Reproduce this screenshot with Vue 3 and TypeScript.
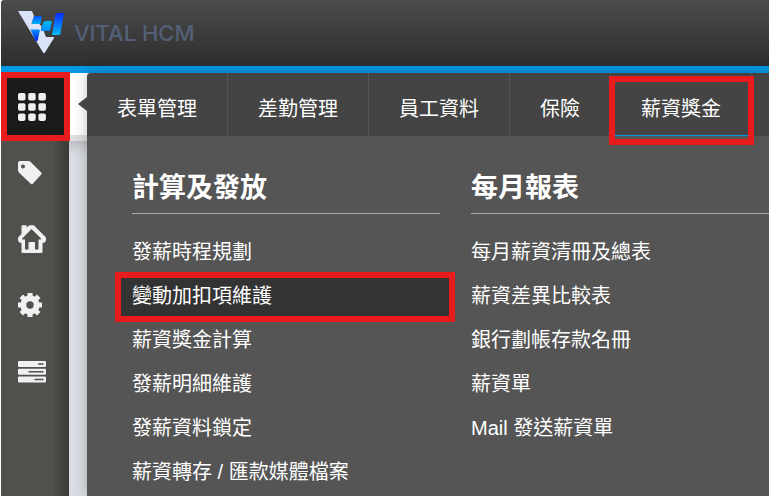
<script setup lang="ts">
import { ref } from 'vue'

interface MenuGroup {
  title: string
  items: string[]
}

const sideItems = [
  { id: 'apps', label: '功能選單' },
  { id: 'tag', label: '標籤' },
  { id: 'home', label: '首頁' },
  { id: 'settings', label: '設定' },
  { id: 'tasks', label: '工作清單' },
]

const tabs = ['表單管理', '差勤管理', '員工資料', '保險', '薪資獎金']

const groups: MenuGroup[] = [
  {
    title: '計算及發放',
    items: ['發薪時程規劃', '變動加扣項維護', '薪資獎金計算', '發薪明細維護', '發薪資料鎖定', '薪資轉存 / 匯款媒體檔案'],
  },
  {
    title: '每月報表',
    items: ['每月薪資清冊及總表', '薪資差異比較表', '銀行劃帳存款名冊', '薪資單', 'Mail 發送薪資單'],
  },
]

const activeSide = ref('apps')
const activeTab = ref('薪資獎金')
const activeItem = ref('變動加扣項維護')
</script>

<template>
  <div class="page">
    <header class="top">
      <svg class="logo" viewBox="0 0 48 44" aria-hidden="true">
        <defs>
          <linearGradient id="barFill" x1="0" y1="0" x2="0" y2="1">
            <stop offset="0" stop-color="#0a2cff" />
            <stop offset="0.45" stop-color="#0a6cff" />
            <stop offset="1" stop-color="#00bdf8" />
          </linearGradient>
          <linearGradient id="blockFill" x1="0" y1="0" x2="0" y2="1">
            <stop offset="0" stop-color="#0050ff" />
            <stop offset="1" stop-color="#00b4fa" />
          </linearGradient>
          <linearGradient id="midFill" x1="0" y1="0" x2="0" y2="1">
            <stop offset="0" stop-color="#00bdfa" />
            <stop offset="1" stop-color="#0088ff" />
          </linearGradient>
          <linearGradient id="lowFill" x1="0" y1="0" x2="0" y2="1">
            <stop offset="0" stop-color="#0090ff" />
            <stop offset="1" stop-color="#001ef0" />
          </linearGradient>
        </defs>
        <path fill="#d9e2f6" d="M0 0H13q1 0 1.400 1l1.600 4-2.500 8h8l2 2.500-.5 4h2.500l2.500 6.500h7.500q.8 0 .5 1L27.300 41q-1.300 2.500-2.600 0Z" />
        <path fill="url(#lowFill)" d="M12.500 18.500h8.500q1 0 .8 1l-2 9.500q-1 2-2.300 1Z" />
        <path fill="url(#blockFill)" d="M17.500 5h6.500l-1.500 8h-7.500q-1.500 0-1-1.500l1.500-5q.5-1.500 2-1.500Z" />
        <path fill="url(#midFill)" d="M28 10h6l-2 10h-8.500q-1 0-.5-1l2-7q.5-2 3-2Z" />
        <path fill="url(#barFill)" d="M39.500 2H46l-3.500 20.500q-.2 1.500-1.500 1.500h-7l3.300-20q.3-2 2.200-2Z" />
      </svg>
      <span class="brand">VITAL HCM</span>
    </header>

    <div class="body">
      <nav class="side" aria-label="主選單">
        <button
          v-for="item in sideItems"
          :key="item.id"
          type="button"
          class="side-btn"
          :class="{ active: activeSide === item.id }"
          :aria-label="item.label"
          @click="activeSide = item.id"
        >
          <svg v-if="item.id === 'apps'" viewBox="0 0 28 28" fill="currentColor">
            <template v-for="row in 3" :key="row">
              <rect v-for="col in 3" :key="col" :x="(col - 1) * 10.200" :y="(row - 1) * 10.200" width="7.500" height="7.500" rx="1.800" />
            </template>
          </svg>
          <svg v-else-if="item.id === 'tag'" viewBox="0 0 28 28" fill="currentColor">
            <path fill-rule="evenodd" d="M2 2h8.500q1.300 0 2.200.9l10.500 10.500q1 1 0 2l-8.400 9.400q-1 1-2 0L1.400 13.900Q0 12.500 0 11.200V4Q0 2 2 2Zm3 3.500a2 2 0 1 0 .01 0Z" />
          </svg>
          <svg v-else-if="item.id === 'home'" viewBox="0 0 28 28" fill="currentColor">
            <path
              fill-rule="evenodd"
              d="M3.500 1q0-.7.7-.7H8q.7 0 .7.700v1.500L11.500.3h4.300L27.500 12q.5.500.5 1.200v2.300l-1.500 2.300h-2V27q0 1-1 1h-19q-1 0-1-1v-9.200h-2L0 15.500v-2.300q0-.7.500-1.200l3-3ZM13.600 4 4.200 13.500v1H7v10h13.500v-10H23v-1Z"
            />
            <path d="M10.500 18q0-1 1-1H16q1 0 1 1v7h-6.500Z" />
          </svg>
          <svg v-else-if="item.id === 'settings'" viewBox="0 0 28 28" fill="none" stroke="currentColor">
            <circle cx="12" cy="14" r="6.700" stroke-width="6" />
            <path stroke-width="5.200" d="M12 2v4M12 22v4M0 14h4M20 14h4" />
            <path stroke-width="5" d="M3.300 5.300l3 3M17.700 19.700l3 3M20.700 5.300l-3 3M6.300 19.700l-3 3" />
          </svg>
          <svg v-else viewBox="0 0 28 28" fill="currentColor">
            <path
              fill-rule="evenodd"
              d="M1 4h26q1 0 1 1v4q0 1-1 1H1q-1 0-1-1V5q0-1 1-1Zm19 2.300v1.500h5.500V6.300ZM1 11.700h26q1 0 1 1v4q0 1-1 1H1q-1 0-1-1v-4q0-1 1-1Zm9.500 2.300v1.500h15V14ZM1 19.500h26q1 0 1 1v4q0 1-1 1H1q-1 0-1-1v-4q0-1 1-1ZM16.500 21.800v1.500h9v-1.500Z"
            />
          </svg>
        </button>
      </nav>

      <main class="stage">
        <section class="mega">
          <nav class="tabs" aria-label="模組">
            <a
              v-for="tab in tabs"
              :key="tab"
              href="#"
              class="tab"
              :class="{ active: activeTab === tab }"
              @click.prevent="activeTab = tab"
            >{{ tab }}</a>
          </nav>
          <div class="groups">
            <section v-for="group in groups" :key="group.title" class="group">
              <h2>{{ group.title }}</h2>
              <ul>
                <li v-for="item in group.items" :key="item">
                  <a
                    href="#"
                    class="entry"
                    :class="{ active: activeItem === item }"
                    @click.prevent="activeItem = item"
                  >{{ item }}</a>
                </li>
              </ul>
            </section>
          </div>
        </section>
      </main>
    </div>
  </div>
</template>

<style>
body {
  margin: 0;
  background: #fff;
}
</style>

<style scoped>
.page {
  display: flex;
  flex-direction: column;
  height: 100vh;
  overflow: hidden;
  padding-left: 1px;
  box-sizing: border-box;
  font-family: "Liberation Sans", "Noto Sans CJK TC", sans-serif;
  color: #fff;
}

.top {
  display: flex;
  flex: none;
  align-items: center;
  gap: 8px;
  height: 66px;
  padding-left: 17px;
  border-bottom: 7px solid #0098e4;
  border-top-left-radius: 3px;
  background: linear-gradient(#4b4b4b, #2e2e2e);
}

.logo {
  width: 48px;
  height: 44px;
}

.brand {
  font-family: Inter, "Liberation Sans", sans-serif;
  font-size: 22px;
  font-weight: 500;
  line-height: 24px;
  color: #536077;
}

.body {
  display: flex;
  flex: 1;
  min-height: 0;
}

.side {
  display: flex;
  flex: none;
  flex-direction: column;
  width: 68px;
  padding-top: 1px;
  box-sizing: border-box;
  background: linear-gradient(to right, #50504d 52px, #3a3935 68px);
}

.side-btn {
  position: relative;
  flex: none;
  height: 66px;
  margin: 0;
  padding: 0 0 0 17px;
  border: 0;
  background: none;
  color: #f0f0f0;
  text-align: left;
}

.side-btn svg {
  display: block;
  width: 28px;
  height: 28px;
}

.side-btn.active {
  background: #1b1b1b;
}

.side-btn.active::after,
.tab.active::after,
.entry.active::after {
  content: "";
  position: absolute;
  z-index: 3;
  border: 6px solid #e81c1c;
  pointer-events: none;
}

.side-btn.active::after {
  inset: -2px -1px -1px 0;
}

.stage {
  display: flex;
  flex: 1;
  min-width: 0;
  padding-left: 18px;
  background:
    linear-gradient(#fff 62px, #dfdfdf 62px, #dfdfdf 68px, #bfc1c7 68px, #d9dce2 82px, #d9dce2);
}

.mega {
  position: relative;
  flex: 1;
  min-width: 0;
  border-top-left-radius: 4px;
  background: #555;
  box-shadow: 0 0 14px rgba(0, 0, 0, 0.25);
}

.mega::before {
  content: "";
  position: absolute;
  top: 24px;
  left: -9px;
  border: solid transparent;
  border-width: 7px 9px 7px 0;
  border-right-color: #444;
}

.tabs {
  display: flex;
  height: 63px;
  border-top-left-radius: 4px;
  background: #444;
}

.tab {
  position: relative;
  flex: none;
  box-sizing: border-box;
  padding: 0 30px;
  border-right: 1px solid #555;
  height: 63px;
  font-size: 20px;
  line-height: 72px;
  color: #fff;
  text-decoration: none;
}

.tab.active {
  box-shadow: inset 0 -1px #0098e4;
}

.tab.active::after {
  inset: 3px -3px -9px -2px;
}

.groups {
  display: grid;
  grid-template-columns: minmax(308px, 1fr) minmax(298px, 1fr);
  gap: 31px;
  padding: 28px 0 0 45px;
}

.group h2 {
  margin: 0;
  padding-bottom: 1px;
  border-bottom: 1px solid #aaa;
  font-size: 27px;
  font-weight: 700;
  line-height: 48px;
}

.group ul {
  margin: 0;
  padding: 15px 0 0;
  list-style: none;
}

.entry {
  position: relative;
  display: block;
  margin: 0 -12px;
  padding: 2px 12px 0;
  font-size: 20px;
  line-height: 42px;
  color: #fff;
  text-decoration: none;
  white-space: nowrap;
}

.entry.active {
  background: #333;
}

.entry.active::after {
  inset: -1px -3px -5px -5px;
}
</style>
